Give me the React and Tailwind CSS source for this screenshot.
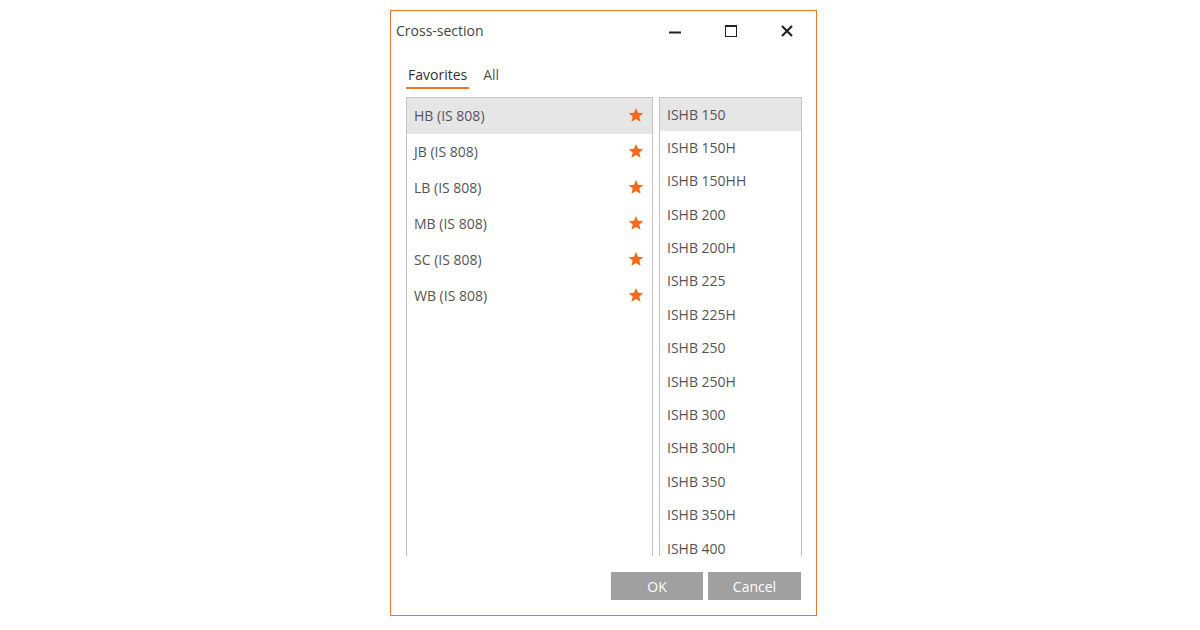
import React from 'react';

const families = ['HB', 'JB', 'LB', 'MB', 'SC', 'WB'];
const sections = [
  'ISHB 150', 'ISHB 150H', 'ISHB 150HH', 'ISHB 200', 'ISHB 200H', 'ISHB 225', 'ISHB 225H',
  'ISHB 250', 'ISHB 250H', 'ISHB 300', 'ISHB 300H', 'ISHB 350', 'ISHB 350H', 'ISHB 400',
];

const Star = () => (
  <svg width="16" height="16" viewBox="0 0 24 24">
    <path d="M12 1.5l3.1 7.2 7.8.6-5.9 5.1 1.8 7.6L12 18l-6.8 4 1.8-7.6-5.9-5.1 7.8-.6z" fill="#f26b1d" />
  </svg>
);

const App = () => {
  return (
    <div className="w-[1200px] h-[630px] bg-white pl-[390px] pt-[10px]" style={{ fontFamily: '"Open Sans", sans-serif' }}>
      <div className="w-[427px] h-[606px] border border-[#f37526] flex flex-col">
        {/* Title bar */}
        <div className="h-[39px] flex items-center pl-[5px] text-[14px] text-[#444]">
          <span className="flex-1">Cross-section</span>
          <div className="flex items-center mr-[1px]">
            <div className="w-[56px] flex justify-center">
              <svg width="12" height="12" viewBox="0 0 12 12"><rect x="0" y="6.5" width="12" height="2" fill="#222" /></svg>
            </div>
            <div className="w-[56px] flex justify-center">
              <svg width="12" height="12" viewBox="0 0 12 12"><rect x="0.5" y="0.5" width="11" height="11" fill="none" stroke="#222" /><rect x="0" y="0" width="12" height="2" fill="#222" /></svg>
            </div>
            <div className="w-[56px] flex justify-center">
              <svg width="12" height="12" viewBox="0 0 12 12"><path d="M1 1L11 11M11 1L1 11" stroke="#222" strokeWidth="2.2" /></svg>
            </div>
          </div>
        </div>

        {/* Tabs */}
        <div className="flex items-end gap-[14px] pl-[15px] mt-[15px] h-[24px] text-[14px]">
          <div className="flex flex-col items-center">
            <span className="text-[#333] px-[2px] leading-[18px]">Favorites</span>
            <div className="h-[2px] w-[63px] bg-[#f37526] mt-[3px]" />
          </div>
          <span className="text-[#555] leading-[18px] mb-[5px]">All</span>
        </div>

        {/* Lists */}
        <div className="flex gap-[6px] pl-[15px] mt-[8px] h-[459px]">
          <div className="w-[247px] border-x border-t border-[#c4c4c4] overflow-hidden">
            {families.map((f, i) => (
              <div
                key={f}
                className={`h-[36px] flex items-center justify-between pl-[7px] pr-[8px] pb-[2px] text-[14px] text-[#555] ${i === 0 ? 'bg-[#e6e6e6]' : ''}`}
              >
                <span>{f} (IS 808)</span>
                <Star />
              </div>
            ))}
          </div>
          <div className="w-[143px] border-x border-t border-[#c4c4c4]">
            {sections.map((s, i) => (
              <div
                key={s}
                className={`${i === sections.length - 1 ? 'h-[23px]' : 'h-[33.4px]'} flex items-start pt-[8.5px] pl-[7px] text-[14px] leading-[15px] text-[#555] ${i === 0 ? 'bg-[#e6e6e6]' : ''}`}
              >
                {s}
              </div>
            ))}
          </div>
        </div>

        {/* Buttons */}
        <div className="flex justify-end gap-[5px] pr-[15px] mt-[16px]">
          <button className="w-[92px] h-[28px] bg-[#a0a0a0] text-white text-[14px]">OK</button>
          <button className="w-[93px] h-[28px] bg-[#a0a0a0] text-white text-[14px]">Cancel</button>
        </div>
      </div>
    </div>
  );
};

export default App;
